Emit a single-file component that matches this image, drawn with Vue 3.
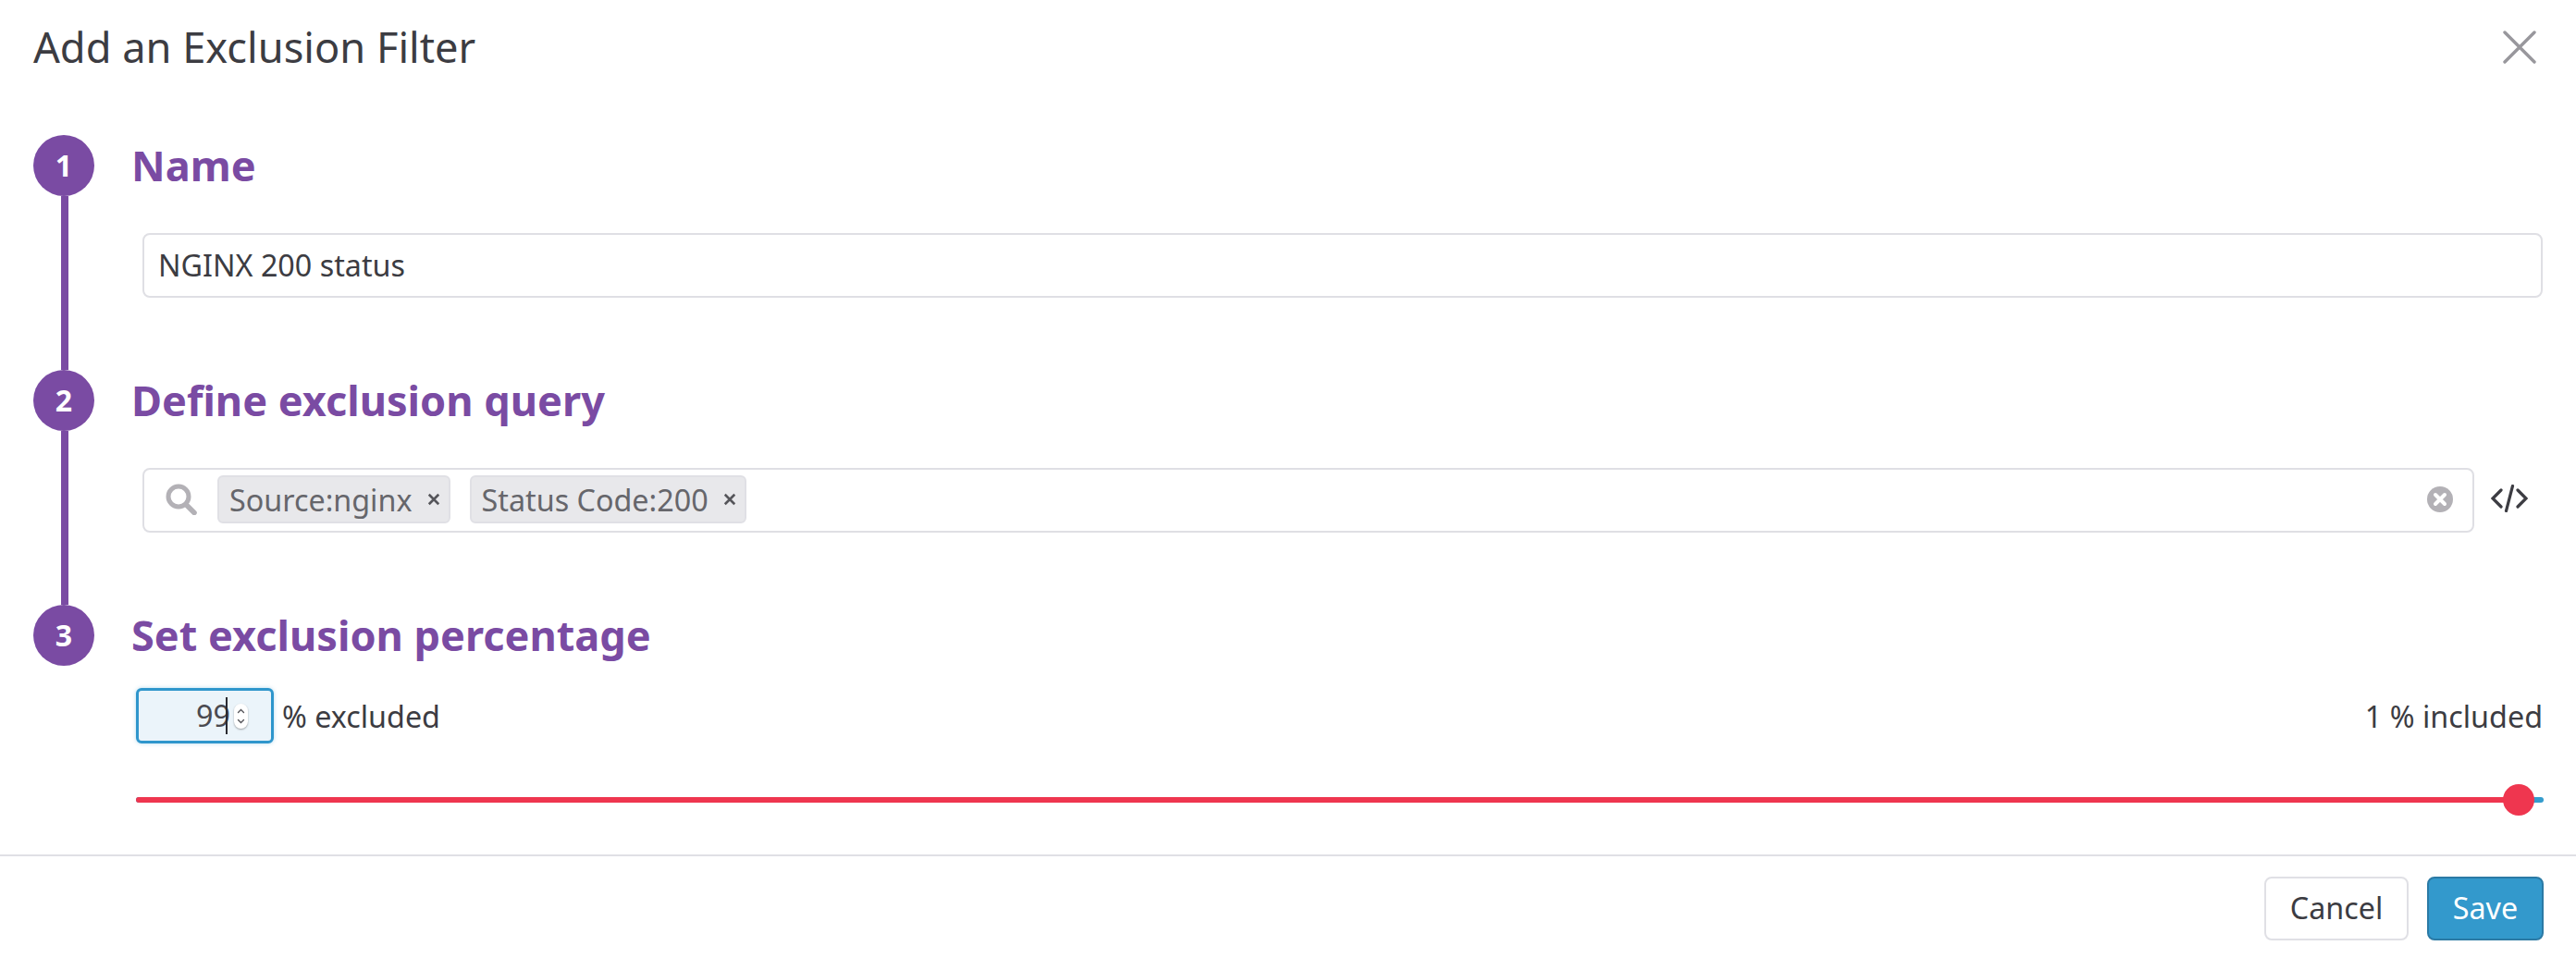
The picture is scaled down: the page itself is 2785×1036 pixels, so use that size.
<template>
  <div class="modal">
    <header class="modal-header">
      <h1 class="modal-title">Add an Exclusion Filter</h1>
      <button class="close-button" aria-label="Close">
        <svg viewBox="0 0 36 36" fill="none" stroke="currentColor" stroke-width="3.4" stroke-linecap="round">
          <path d="M2 2 L34 34 M34 2 L2 34" />
        </svg>
      </button>
    </header>

    <div class="steps">
      <section class="step">
        <div class="step-marker">
          <span class="step-number">1</span>
          <span class="step-line" />
        </div>
        <div class="step-content">
          <h2 class="step-title">Name</h2>
          <input v-model="name" class="text-input" type="text" />
        </div>
      </section>

      <section class="step">
        <div class="step-marker">
          <span class="step-number">2</span>
          <span class="step-line" />
        </div>
        <div class="step-content">
          <h2 class="step-title">Define exclusion query</h2>
          <div class="query-row">
            <div class="query-box">
              <svg class="search-icon" viewBox="0 0 34 34" fill="none" stroke="currentColor" stroke-linecap="round">
                <circle cx="14" cy="14" r="11" stroke-width="5" />
                <path d="M22.5 23 L31 31.5" stroke-width="5.5" />
              </svg>
              <span v-for="chip in chips" :key="chip" class="chip">
                {{ chip }}
                <svg class="chip-remove" viewBox="0 0 12 12" fill="none" stroke="currentColor" stroke-width="2.2">
                  <path d="M1.5 1.5 L10.5 10.5 M10.5 1.5 L1.5 10.5" />
                </svg>
              </span>
              <svg class="clear-icon" viewBox="0 0 28 28">
                <circle cx="14" cy="14" r="14" fill="#b3b1b6" />
                <path d="M9 9 L19 19 M19 9 L9 19" stroke="#fff" stroke-width="4" stroke-linecap="round" />
              </svg>
            </div>
            <svg class="code-icon" viewBox="0 0 40 30" fill="none" stroke="currentColor" stroke-width="3.2" stroke-linecap="round">
              <path d="M11 6 L2 15 L11 24 M29 6 L38 15 L29 24 M23.5 1.5 L16.5 28.5" />
            </svg>
          </div>
        </div>
      </section>

      <section class="step step--last">
        <div class="step-marker">
          <span class="step-number">3</span>
        </div>
        <div class="step-content">
          <h2 class="step-title">Set exclusion percentage</h2>
          <div class="percent-row">
            <div class="percent-left">
              <div class="number-box">
                <span class="number-value">{{ excluded }}</span>
                <span class="caret" />
                <span class="spinner">
                  <svg viewBox="0 0 15 27" fill="none" stroke="#55555a" stroke-width="1.4" stroke-linecap="round">
                    <path d="M4.5 9.5 L7.5 6.5 L10.5 9.5 M4.5 17.5 L7.5 20.5 L10.5 17.5" />
                  </svg>
                </span>
              </div>
              <span class="percent-label">% excluded</span>
            </div>
            <span class="percent-label">{{ included }} % included</span>
          </div>
          <div class="slider">
            <div class="slider-fill" :style="{ width: excluded + '%' }" />
            <div class="slider-thumb" :style="{ left: excluded + '%' }" />
          </div>
        </div>
      </section>
    </div>

    <footer class="modal-footer">
      <button class="btn">Cancel</button>
      <button class="btn btn--primary">Save</button>
    </footer>
  </div>
</template>

<script setup>
import { computed, ref } from 'vue'

const name = ref('NGINX 200 status')
const chips = ['Source:nginx', 'Status Code:200']
const excluded = ref(99)
const included = computed(() => 100 - excluded.value)
</script>

<style>
html, body {
  margin: 0;
  background: #fff;
}
</style>

<style scoped>
.modal {
  width: 2785px;
  height: 1036px;
  display: flex;
  flex-direction: column;
  box-sizing: border-box;
  background: #fff;
  color: #3c3c42;
  font-family: "Noto Sans", "Open Sans", sans-serif;
  overflow: hidden;
}

.modal-header {
  height: 146px;
  flex-shrink: 0;
  display: flex;
  justify-content: space-between;
  align-items: flex-start;
  padding: 0 36px;
  box-sizing: border-box;
}

.modal-title {
  margin: 21px 0 0;
  font-size: 45.2px;
  line-height: 60px;
  font-weight: 400;
}

.close-button {
  width: 36px;
  height: 36px;
  margin: 33px 7px 0 0;
  padding: 0;
  border: 0;
  background: none;
  color: #98979c;
}

.close-button svg {
  display: block;
  width: 36px;
  height: 36px;
}

.steps {
  flex: 1;
  padding: 0 36px;
}

.step {
  display: flex;
  gap: 40px;
  height: 254px;
}

.step--last {
  height: 270px;
}

.step-marker {
  width: 66px;
  flex-shrink: 0;
  display: flex;
  flex-direction: column;
  align-items: center;
}

.step-number {
  width: 66px;
  height: 66px;
  flex-shrink: 0;
  border-radius: 50%;
  background: #7a4ba3;
  color: #fff;
  font-size: 32px;
  font-weight: 700;
  line-height: 66px;
  text-align: center;
}

.step-line {
  width: 8px;
  flex: 1;
  margin-left: 2px;
  background: #7a4ba3;
}

.step-content {
  flex: 1;
  min-width: 0;
}

.step-title {
  margin: 0;
  font-size: 45.1px;
  font-weight: 700;
  line-height: 65px;
  color: #7a4ba3;
}

.text-input {
  display: block;
  box-sizing: border-box;
  width: 2595px;
  height: 70px;
  margin: 41px 0 0 12px;
  padding: 0 15px 3px;
  border: 2px solid #dfdfe4;
  border-radius: 8px;
  outline: none;
  font: inherit;
  font-size: 32.3px;
  color: #3c3c42;
}

.query-row {
  display: flex;
  align-items: center;
  margin: 41px 0 0 12px;
}

.query-box {
  box-sizing: border-box;
  width: 2521px;
  height: 70px;
  display: flex;
  align-items: center;
  padding: 0 22px 2px 23px;
  border: 2px solid #dfdfe4;
  border-radius: 8px;
}

.search-icon {
  width: 34px;
  height: 34px;
  margin-right: 22px;
  color: #b3b1b6;
}

.chip {
  box-sizing: border-box;
  height: 52px;
  display: flex;
  align-items: center;
  gap: 16px;
  margin-right: 21px;
  padding: 0 9px 0 11px;
  border: 2px solid #e0e0e5;
  border-radius: 6px;
  background: #e8e8eb;
  color: #66666b;
  font-size: 32.3px;
  white-space: nowrap;
}

.chip-remove {
  width: 14px;
  height: 14px;
  color: #55555a;
}

.clear-icon {
  width: 28px;
  height: 28px;
  margin-left: auto;
  margin-right: -1px;
}

.code-icon {
  width: 40px;
  height: 30px;
  margin: -5px 0 0 18px;
}

.percent-row {
  display: flex;
  justify-content: space-between;
  align-items: center;
  width: 2602px;
  margin: 25px 0 0 5px;
}

.percent-left {
  display: flex;
  align-items: center;
  gap: 9px;
}

.percent-label {
  font-size: 32.3px;
  line-height: 60px;
}

.number-box {
  position: relative;
  box-sizing: border-box;
  width: 149px;
  height: 60px;
  border: 3px solid #2f96cc;
  border-radius: 6px;
  background: #ebf4fa;
  box-shadow: 0 0 4px rgba(47, 150, 204, 0.35);
}

.number-value {
  position: absolute;
  right: 44px;
  top: -1px;
  font-size: 32.3px;
  line-height: 54px;
  color: #4a4a50;
}

.caret {
  position: absolute;
  left: 94px;
  top: 7px;
  width: 2px;
  height: 40px;
  background: #2a2a30;
}

.spinner {
  position: absolute;
  left: 103px;
  top: 14px;
  width: 15px;
  height: 27px;
  border-radius: 8px;
  background: #fff;
  box-shadow: 0 1px 2px rgba(0, 0, 0, 0.35);
}

.spinner svg {
  display: block;
  width: 15px;
  height: 27px;
}

.slider {
  position: relative;
  width: 2603px;
  height: 6px;
  margin: 58px 0 0 5px;
  border-radius: 3px;
  background: #349ccd;
}

.slider-fill {
  height: 6px;
  border-radius: 3px;
  background: #ef364f;
}

.slider-thumb {
  position: absolute;
  top: -14px;
  width: 34px;
  height: 34px;
  margin-left: -18px;
  border-radius: 50%;
  background: #ef364f;
}

.modal-footer {
  height: 112px;
  flex-shrink: 0;
  display: flex;
  justify-content: flex-end;
  gap: 20px;
  box-sizing: border-box;
  padding: 22px 35px 0 0;
  border-top: 2px solid #e0e0e5;
}

.btn {
  box-sizing: border-box;
  width: 156px;
  height: 69px;
  padding: 0 0 3px;
  border: 2px solid #e0e0e5;
  border-radius: 8px;
  background: #fff;
  color: #3c3c42;
  font: inherit;
  font-size: 32.3px;
}

.btn--primary {
  width: 126px;
  border-color: #2b7aa5;
  background: #3399cc;
  color: #fff;
}
</style>
